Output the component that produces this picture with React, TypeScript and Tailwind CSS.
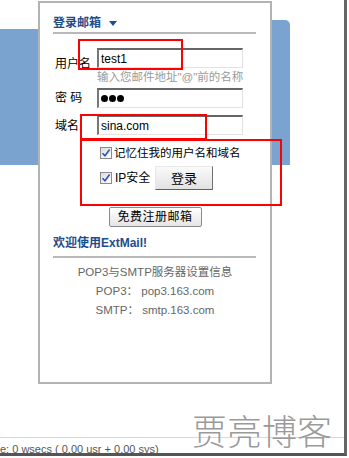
import React from "react";

const font = { fontFamily: '"Liberation Sans", "Noto Sans CJK SC", sans-serif' };

function Check() {
  return (
    <span className="relative inline-flex h-[12px] w-[12px] shrink-0 items-center justify-center border border-[#8a8a8a] bg-gradient-to-br from-[#dcdcdc] to-[#ffffff]">
      <svg width="10" height="10" viewBox="0 0 10 10" className="block">
        <path d="M1.5 5.2 L4 7.8 L8.6 1.6" fill="none" stroke="#2a56b8" strokeWidth="1.6" />
      </svg>
    </span>
  );
}

function Field({ value, password }: { value: string; password?: boolean }) {
  return (
    <div className="flex h-[20px] w-[146px] items-center border-t-2 border-l-2 border-r border-b border-t-[#666] border-l-[#777] border-r-[#e2e2e2] border-b-[#e2e2e2] bg-white pl-[2px] text-[12px] leading-none text-black">
      {password ? (
        <span className="flex gap-[1px]">
          <span className="h-[7px] w-[7px] rounded-full bg-black" />
          <span className="h-[7px] w-[7px] rounded-full bg-black" />
          <span className="h-[7px] w-[7px] rounded-full bg-black" />
        </span>
      ) : (
        value
      )}
    </div>
  );
}

export default function App() {
  return (
    <div className="relative h-[458px] w-[349px] overflow-hidden bg-white" style={font}>
      <div className="relative h-[456px] w-[347px] border-r-[3px] border-b-[3px] border-r-[#666] border-b-[#555] bg-white">
        {/* blue backdrop */}
        <div className="absolute left-0 top-[29px] h-[136px] w-[290px] bg-[#7ba3cf]" />
        <div className="absolute left-[240px] top-[20px] h-[145px] w-[50px] rounded-tr-[5px] bg-[#7ba3cf]" />

        {/* footer line */}
        <div className="absolute left-0 top-[437px] h-px w-[344px] bg-[#d8d8d8]" />
        <div className="absolute left-0 top-[442px] whitespace-nowrap text-[11px] leading-[14px] text-[#555]">
          e: 0 wsecs ( 0.00 usr + 0.00 sys)
        </div>

        {/* login panel */}
        <div className="absolute left-[38px] top-[1px] flex h-[383px] w-[234px] flex-col border-2 border-[#b3b3b3] bg-white">
          <div className="flex h-[16px] items-center pl-[13px] mt-[12px] text-[12px] font-bold leading-[16px] text-[#1e4d8c]">
            登录邮箱
            <svg width="8" height="5" viewBox="0 0 8 5" className="ml-[8px]">
              <path d="M0 0 L8 0 L4 5 Z" fill="#1e4d8c" />
            </svg>
          </div>
          <div className="ml-[13px] mt-[1px] h-[2px] w-[203px] bg-[#b8b8b8]" />

          <div className="mt-[14px] flex items-end pl-[15px]">
            <div className="mb-[-3px] w-[42px] text-[12px] leading-[14px] text-black">用户名</div>
            <Field value="test1" />
          </div>
          <div className="mt-[2px] pl-[57px] text-[11.5px] leading-[14px] whitespace-nowrap text-[#9a9a9a]">
            输入您邮件地址"@"前的名称
          </div>
          <div className="mt-[4px] flex items-center pl-[15px]">
            <div className="w-[42px] text-[12px] leading-[14px] text-black">密 码</div>
            <Field value="" password />
          </div>
          <div className="mt-[7px] flex items-center pl-[15px]">
            <div className="w-[42px] translate-y-[1px] text-[12px] leading-[14px] text-black">域名</div>
            <Field value="sina.com" />
          </div>

          <div className="mt-[11px] flex h-[14px] items-center pl-[60px]">
            <Check />
            <span className="ml-[2px] text-[11.5px] leading-[14px] text-black">记忆住我的用户名和域名</span>
          </div>
          <div className="mt-[6px] flex h-[24px] items-center pl-[60px]">
            <Check />
            <span className="ml-[3px] w-[40px] text-[12px] leading-[14px] text-black">IP安全</span>
            <button className="flex h-[24px] w-[58px] items-center justify-center border border-t-[#e8e8e8] border-l-[#e8e8e8] border-r-[#707070] border-b-[#606060] bg-gradient-to-b from-[#fafafa] to-[#e2e2e2] text-[13px] leading-none text-black">
              登录
            </button>
          </div>

          <div className="mt-[17px] flex justify-center">
            <button className="flex h-[20px] w-[93px] items-center justify-center rounded-[2px] border border-[#8c8c8c] bg-gradient-to-b from-[#ffffff] to-[#e4e4e4] text-[12px] leading-none tracking-[0.5px] text-black">
              免费注册邮箱
            </button>
          </div>

          <div className="mt-[8px] pl-[13px] text-[12px] font-bold leading-[16px] text-[#1e4d8c]">欢迎使用ExtMail!</div>
          <div className="ml-[13px] mt-[5px] h-[2px] w-[203px] bg-[#b8b8b8]" />
          <div className="mt-[5px] flex flex-col items-center text-[11.5px] leading-[19px] text-[#666]">
            <div>POP3与SMTP服务器设置信息</div>
            <div>POP3： pop3.163.com</div>
            <div>SMTP： smtp.163.com</div>
          </div>
        </div>

        {/* red annotation boxes */}
        <div className="absolute left-[78px] top-[39px] h-[31px] w-[105px] border-2 border-[#f00]" />
        <div className="absolute left-[80px] top-[114px] h-[26px] w-[127px] border-2 border-[#f00]" />
        <div className="absolute left-[80px] top-[139px] h-[67px] w-[202px] border-2 border-[#f00]" />

        {/* watermark */}
        <div
          className="absolute left-[192px] top-[410px] whitespace-nowrap text-[35px] leading-[40px] text-[#9a9a9a]"
          style={{ fontFamily: '"Noto Sans CJK SC", sans-serif', fontWeight: 300 }}
        >
          贾亮博客
        </div>
      </div>
    </div>
  );
}
